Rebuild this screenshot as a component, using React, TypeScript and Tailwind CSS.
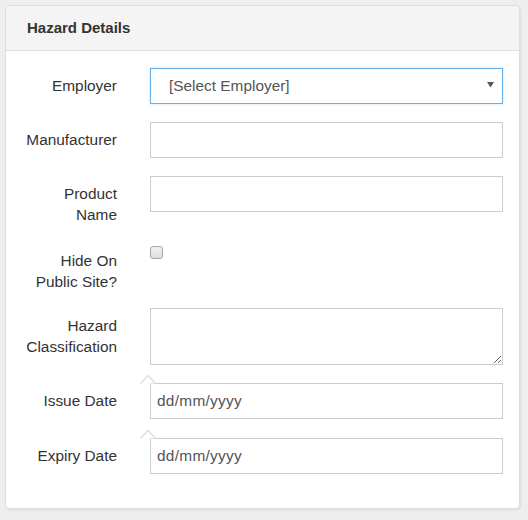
import React from 'react';

const font = { fontFamily: '"Liberation Sans", Arial, sans-serif' };

const DateCaret = () => (
  <svg
    className="absolute left-[-10px] top-[-9px] pointer-events-none"
    width="17"
    height="10"
    viewBox="0 0 17 10"
  >
    <path d="M0.5 9.5 L8 1.5 L15.5 9.5" fill="white" stroke="#dcdcdc" strokeWidth="1.2" />
  </svg>
);

const Label = ({ children }: { children: React.ReactNode }) => (
  <label className="w-[111px] shrink-0 text-right pt-[7px] text-[15.4px] leading-[21px] text-[#333]">
    {children}
  </label>
);

const inputCls =
  'w-full h-[36px] border border-[#ccc] bg-white px-[6px] text-[15.4px] text-[#555] outline-none';

export default function App() {
  return (
    <div className="w-[528px] h-[520px] bg-[#eeeeee] pt-[5px] pl-[5px]" style={font}>
      <div className="w-[515px] h-[504px] bg-white border border-[#dedede] rounded-[4px] shadow-[1px_1px_2px_rgba(0,0,0,0.08)] overflow-hidden">
        {/* Header */}
        <div className="h-[45px] bg-[#f4f4f4] border-b border-[#e0e0e0] px-[21px] flex items-center">
          <h3 className="text-[15px] font-bold text-[#333]">Hazard Details</h3>
        </div>

        {/* Form */}
        <div className="pt-[17px] pr-[16px] flex flex-col">
          <div className="flex gap-[33px] mb-[18px]">
            <Label>Employer</Label>
            <div className="flex-1 relative">
              <div className="w-full h-[36px] border border-[#66afe9] bg-white pl-[18px] flex items-center text-[15.4px] text-[#555] shadow-[0_0_3px_rgba(102,175,233,0.35)]">
                [Select Employer]
              </div>
              <svg className="absolute right-[9px] top-[14px]" width="7" height="6" viewBox="0 0 7 6">
                <path d="M0 0 H7 L3.5 5.5 Z" fill="#555" />
              </svg>
            </div>
          </div>

          <div className="flex gap-[33px] mb-[18px]">
            <Label>Manufacturer</Label>
            <div className="flex-1">
              <input className={inputCls} readOnly />
            </div>
          </div>

          <div className="flex gap-[33px] mb-[18px]">
            <Label>
              Product
              <br />
              Name
            </Label>
            <div className="flex-1">
              <input className={inputCls} readOnly />
            </div>
          </div>

          <div className="flex gap-[33px] mb-[16px]">
            <Label>
              Hide On
              <br />
              Public Site?
            </Label>
            <div className="flex-1 pt-[3px]">
              <div className="w-[13px] h-[13px] rounded-[3px] border border-[#a6a6a6] bg-gradient-to-b from-[#f2f2f2] to-[#dddddd]" />
            </div>
          </div>

          <div className="flex gap-[33px] mb-[18px]">
            <Label>
              Hazard
              <br />
              Classification
            </Label>
            <div className="flex-1 flex">
              <textarea className="w-full h-[57px] border border-[#ccc] bg-white outline-none" readOnly />
            </div>
          </div>

          <div className="flex gap-[33px] mb-[19px]">
            <Label>Issue Date</Label>
            <div className="flex-1 relative">
              <DateCaret />
              <input className={`${inputCls} tracking-[0.3px]`} defaultValue="dd/mm/yyyy" readOnly />
            </div>
          </div>

          <div className="flex gap-[33px]">
            <Label>Expiry Date</Label>
            <div className="flex-1 relative">
              <DateCaret />
              <input className={`${inputCls} tracking-[0.3px]`} defaultValue="dd/mm/yyyy" readOnly />
            </div>
          </div>
        </div>
      </div>
    </div>
  );
}
